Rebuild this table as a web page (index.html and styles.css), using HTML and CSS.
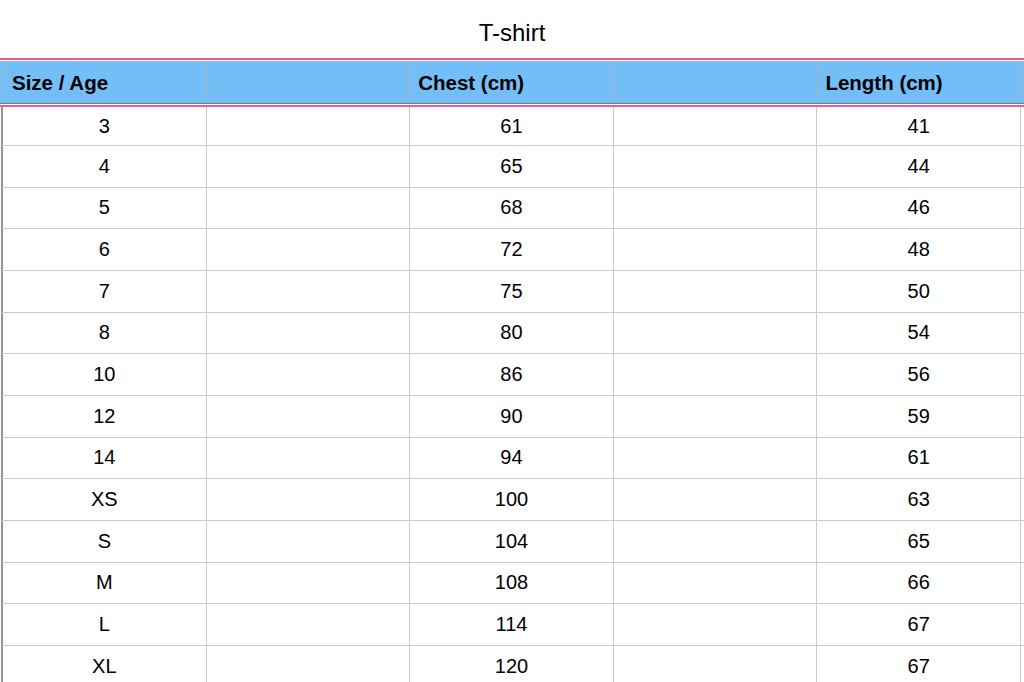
FILE: index.html
```html
<!DOCTYPE html>
<html>
<head>
<meta charset="utf-8">
<link rel="stylesheet" href="styles.css">
</head>
<body>
<div class="title">T-shirt</div>
<div class="sheet">
  <div class="head-wrap">
    <div class="row head">
      <div class="cell">Size / Age</div>
      <div class="cell"></div>
      <div class="cell">Chest (cm)</div>
      <div class="cell"></div>
      <div class="cell">Length (cm)</div>
      <div class="cell last"></div>
    </div>
  </div>
  <div class="body">
    <div class="row"><div class="cell">3</div><div class="cell"></div><div class="cell">61</div><div class="cell"></div><div class="cell">41</div><div class="cell last"></div></div>
    <div class="row"><div class="cell">4</div><div class="cell"></div><div class="cell">65</div><div class="cell"></div><div class="cell">44</div><div class="cell last"></div></div>
    <div class="row"><div class="cell">5</div><div class="cell"></div><div class="cell">68</div><div class="cell"></div><div class="cell">46</div><div class="cell last"></div></div>
    <div class="row"><div class="cell">6</div><div class="cell"></div><div class="cell">72</div><div class="cell"></div><div class="cell">48</div><div class="cell last"></div></div>
    <div class="row"><div class="cell">7</div><div class="cell"></div><div class="cell">75</div><div class="cell"></div><div class="cell">50</div><div class="cell last"></div></div>
    <div class="row"><div class="cell">8</div><div class="cell"></div><div class="cell">80</div><div class="cell"></div><div class="cell">54</div><div class="cell last"></div></div>
    <div class="row"><div class="cell">10</div><div class="cell"></div><div class="cell">86</div><div class="cell"></div><div class="cell">56</div><div class="cell last"></div></div>
    <div class="row"><div class="cell">12</div><div class="cell"></div><div class="cell">90</div><div class="cell"></div><div class="cell">59</div><div class="cell last"></div></div>
    <div class="row"><div class="cell">14</div><div class="cell"></div><div class="cell">94</div><div class="cell"></div><div class="cell">61</div><div class="cell last"></div></div>
    <div class="row"><div class="cell">XS</div><div class="cell"></div><div class="cell">100</div><div class="cell"></div><div class="cell">63</div><div class="cell last"></div></div>
    <div class="row"><div class="cell">S</div><div class="cell"></div><div class="cell">104</div><div class="cell"></div><div class="cell">65</div><div class="cell last"></div></div>
    <div class="row"><div class="cell">M</div><div class="cell"></div><div class="cell">108</div><div class="cell"></div><div class="cell">66</div><div class="cell last"></div></div>
    <div class="row"><div class="cell">L</div><div class="cell"></div><div class="cell">114</div><div class="cell"></div><div class="cell">67</div><div class="cell last"></div></div>
    <div class="row"><div class="cell">XL</div><div class="cell"></div><div class="cell">120</div><div class="cell"></div><div class="cell">67</div><div class="cell last"></div></div>
  </div>
</div>
</body>
</html>
```

FILE: styles.css
```css
html, body {
  margin: 0;
  padding: 0;
  background: #ffffff;
  overflow: hidden;
}
body {
  width: 1024px;
  height: 682px;
  font-family: "Liberation Sans", Arial, Helvetica, sans-serif;
  color: #000;
}
.title {
  height: 58px;
  box-sizing: border-box;
  padding-top: 19px;
  text-align: center;
  font-size: 24px;
  line-height: 28px;
}
.sheet {
  width: 1024px;
}
.head-wrap {
  border-top: 2px solid #e2619b;
  border-bottom: 2px solid #e2619b;
  padding: 1px 0;
}
.row {
  display: grid;
  grid-template-columns: 3px repeat(5, 203.6px) 1fr;
}
.row::before {
  content: "";
}
.head {
  height: 43px;
  box-sizing: border-box;
  background: #74bef8;
  border-top: 1px solid #a9b8c6;
  border-bottom: 1px solid #6f7c88;
}
.head .cell {
  border-right: 1px solid #a4b6c6;
  font-weight: bold;
  font-size: 20.5px;
  text-align: left;
  padding-left: 8px;
  justify-content: flex-start;
}
.head .cell:first-child {
  border-left: 1px solid #a4b6c6;
}
.head::before {
  background: transparent;
}
.cell {
  display: flex;
  align-items: center;
  justify-content: center;
  box-sizing: border-box;
  border-right: 1px solid #c9c9c9;
  font-size: 20px;
  min-width: 0;
  white-space: nowrap;
}
.cell.last {
  border-right: none;
}
.body {
  border-left: 1px solid #9a9a9a;
  margin-left: 1px;
}
.body .row {
  grid-template-columns: 1px repeat(5, 203.6px) 1fr;
  height: 41.67px;
  box-sizing: border-box;
  border-bottom: 1px solid #c9c9c9;
}
.body .row::before {
  border-right: 1px solid #8f8f8f;
}
.body .row:first-child {
  height: 39px;
}
```
